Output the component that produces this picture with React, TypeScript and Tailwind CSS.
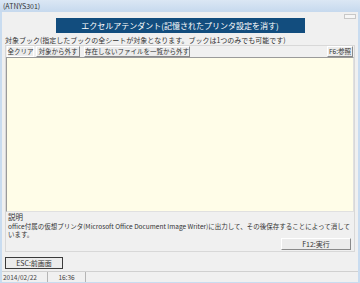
import React from "react";

const jp = { fontFamily: '"Noto Sans CJK JP", "Liberation Sans", sans-serif' };

function Btn({ label, className = "" }: { label: string; className?: string }) {
  return (
    <div
      className={`flex h-[11px] items-center justify-center whitespace-nowrap border border-t-white border-l-white border-r-[#8a8a8a] border-b-[#8a8a8a] bg-[#ececec] text-[6.5px] leading-none text-[#333] ${className}`}
    >
      {label}
    </div>
  );
}

export default function App() {
  return (
    <div className="flex h-[283px] w-[360px] flex-col overflow-hidden bg-[#c9dcf0]" style={jp}>
      {/* title bar */}
      <div className="h-[12px] shrink-0 bg-gradient-to-b from-[#dbe7f4] to-[#c6d9ee] px-[3px] text-[7px] leading-[12px] text-[#333]">
        (ATNYS301)
      </div>

      <div className="mx-[2px] flex min-h-0 flex-1 flex-col bg-[#f0f0f0]">
        <div className="relative flex h-[23px] shrink-0 items-end justify-center pb-[2px]">
          <div className="flex h-[15px] w-[249px] items-center justify-center whitespace-nowrap bg-[#124d7e] text-[8px] leading-none text-white">
            エクセルアテンダント(記憶されたプリンタ設定を消す)
          </div>
          <div className="absolute right-[2px] top-[2px] h-[5px] w-[12px] border border-[#c8c8c8] bg-[#f6f6f6]" />
        </div>

        <div className="whitespace-nowrap px-[3px] pt-[1px] text-[7px] leading-[8px] text-[#333]">
          対象ブック(指定したブックの全シートが対象となります。ブックは1つのみでも可能です)
        </div>

        <div className="mx-[3px] mt-[1px] flex flex-col border-x border-t border-[#d8d8d8]">
          <div className="flex h-[11px] items-center gap-[2px] px-[1px]">
            <Btn
              label="全クリア"
              className="w-[27px] border-t-[#8a8a8a] border-l-[#8a8a8a] border-r-white border-b-white bg-[#d8d8d8]"
            />
            <Btn label="対象から外す" className="w-[44px]" />
            <Btn label="存在しないファイルを一覧から外す" className="ml-[2px] w-[106px]" />
            <div className="flex-1" />
            <Btn label="F6:参照" className="w-[26px]" />
          </div>
          <div className="h-[155px] border border-t-[#9a9a9a] border-l-[#9a9a9a] border-r-[#e0e0e0] border-b-[#e0e0e0] bg-[#fffde8]" />
        </div>

        <div className="mx-[3px] flex flex-col border-x border-b border-[#d8d8d8] px-[2px] pb-[1px]">
          <div className="text-[7.5px] leading-[10px] text-[#333]">説明</div>
          <div className="text-[6.5px] leading-[8px] text-[#333]">
            office付属の仮想プリンタ(Microsoft Office Document Image Writer)に出力して、その後保存することによって消しています。
          </div>
          <div className="flex justify-end pr-[1px]">
            <Btn label="F12:実行" className="h-[12px] w-[70px] text-[7px]" />
          </div>
        </div>

        <div className="px-[3px] pt-[5px]">
          <div className="flex h-[12px] w-[58px] items-center justify-center whitespace-nowrap border border-[#3b3b3b] bg-[#ececec] text-[7px] leading-none text-[#333]">
            ESC:前画面
          </div>
        </div>

        <div className="mt-auto flex h-[11px] shrink-0 items-center border-t border-[#d0d0d0] text-[6.5px] leading-none text-[#444]">
          <div className="flex h-full w-[46px] items-center whitespace-nowrap border-r border-[#b5b5b5] pl-[1px]">2014/02/22</div>
          <div className="flex h-full w-[38px] items-center justify-center border-r border-[#b5b5b5]">16:36</div>
          <div className="flex-1" />
        </div>
      </div>
      <div className="h-[1px] shrink-0" />
    </div>
  );
}
